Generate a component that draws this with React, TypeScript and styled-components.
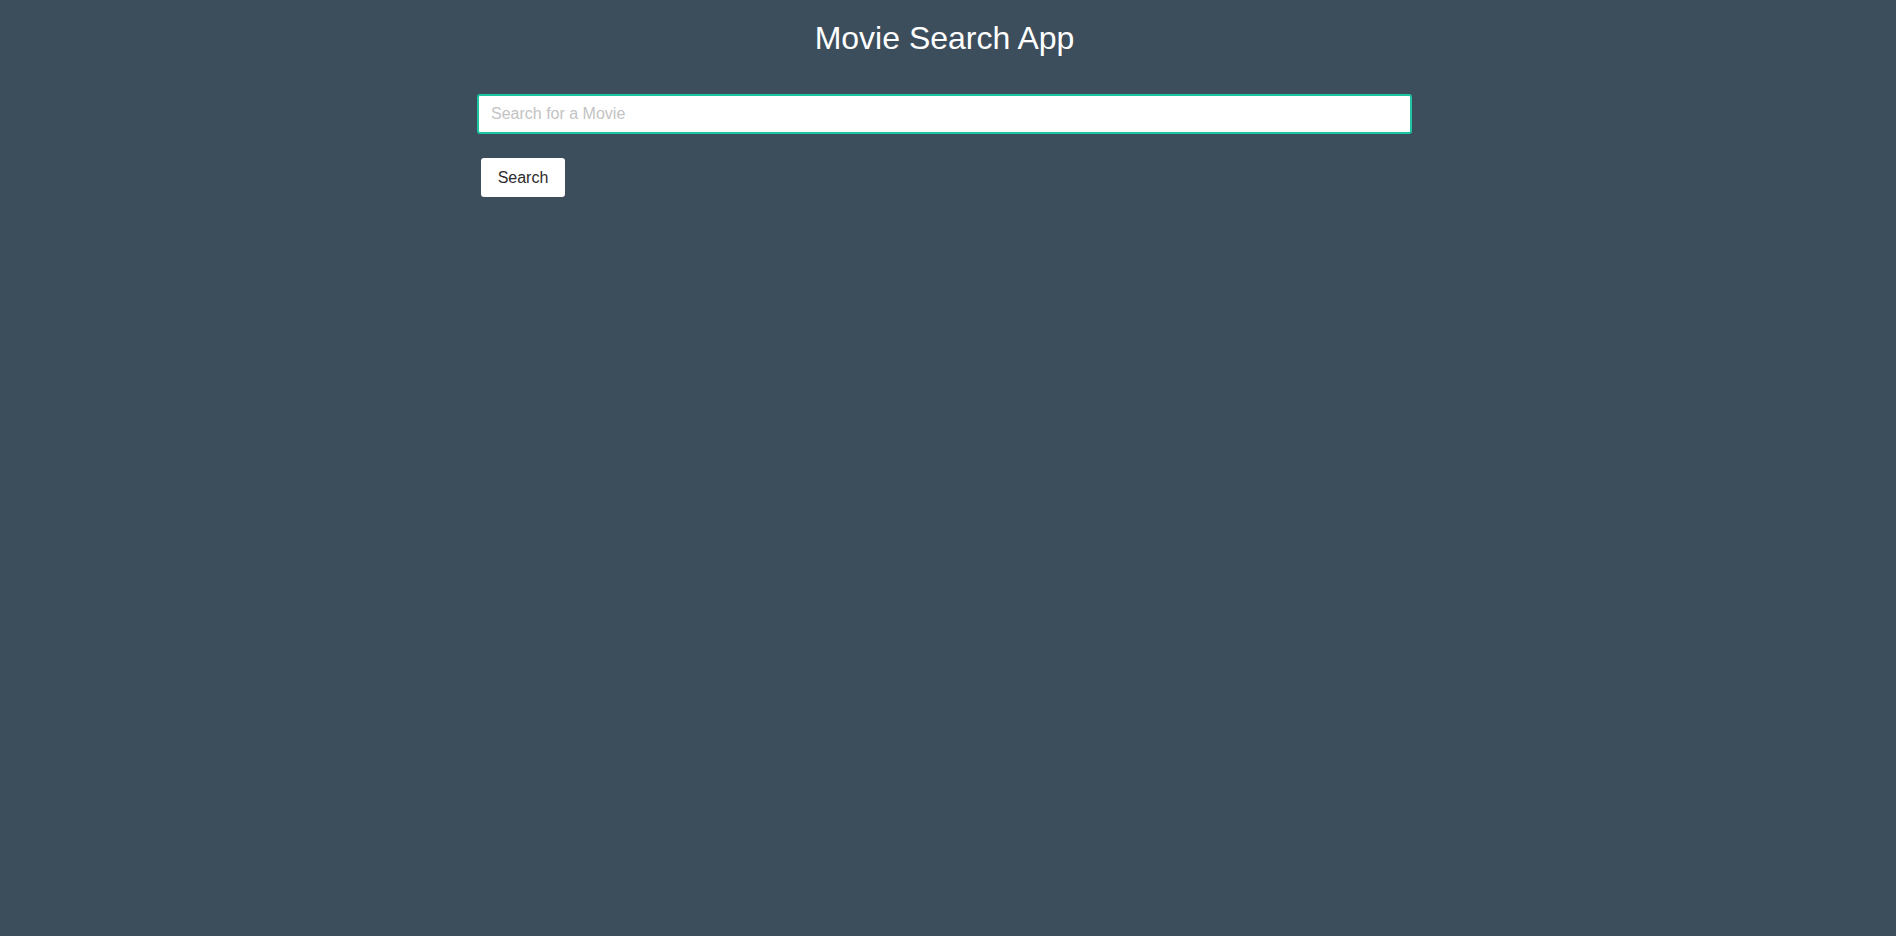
import React, { useState } from "react";
import styled, { createGlobalStyle } from "styled-components";

const GlobalStyle = createGlobalStyle`
  html, body {
    margin: 0;
    padding: 0;
    background: #3c4d5c;
  }
  body {
    font-family: "Liberation Sans", Arial, sans-serif;
  }
`;

const Page = styled.div`
  min-height: 100vh;
  padding-right: 7px;
  box-sizing: border-box;
  background: #3c4d5c;
`;

const Main = styled.main`
  width: 935px;
  margin: 0 auto;
  display: flex;
  flex-direction: column;
  align-items: stretch;
`;

const Title = styled.h1`
  margin: 20px 0 0;
  font-size: 32px;
  line-height: 37px;
  font-weight: 400;
  color: #ffffff;
  text-align: center;
`;

const SearchForm = styled.form`
  display: flex;
  flex-direction: column;
  align-items: flex-start;
  margin-top: 37px;
`;

const SearchInput = styled.input`
  box-sizing: border-box;
  width: 100%;
  height: 40px;
  padding: 0 12px;
  border: 2px solid #1ec5a3;
  border-radius: 3px;
  background: #ffffff;
  font-family: "Liberation Sans", Arial, sans-serif;
  font-size: 16px;
  color: #333333;
  outline: none;

  &::placeholder {
    color: #c3c3c3;
  }
`;

const SearchButton = styled.button`
  box-sizing: border-box;
  margin: 24px 0 0 4px;
  width: 84px;
  height: 39px;
  padding: 0 16px;
  border: none;
  border-radius: 3px;
  background: #ffffff;
  color: #2b2b2b;
  font-family: "Liberation Sans", Arial, sans-serif;
  font-size: 16px;
  cursor: pointer;
`;

export default function App() {
  const [query, setQuery] = useState("");
  return (
    <>
      <GlobalStyle />
      <Page>
        <Main>
          <Title>Movie Search App</Title>
          <SearchForm onSubmit={(e) => e.preventDefault()}>
            <SearchInput
              type="text"
              placeholder="Search for a Movie"
              value={query}
              onChange={(e) => setQuery(e.target.value)}
            />
            <SearchButton type="submit">Search</SearchButton>
          </SearchForm>
        </Main>
      </Page>
    </>
  );
}
